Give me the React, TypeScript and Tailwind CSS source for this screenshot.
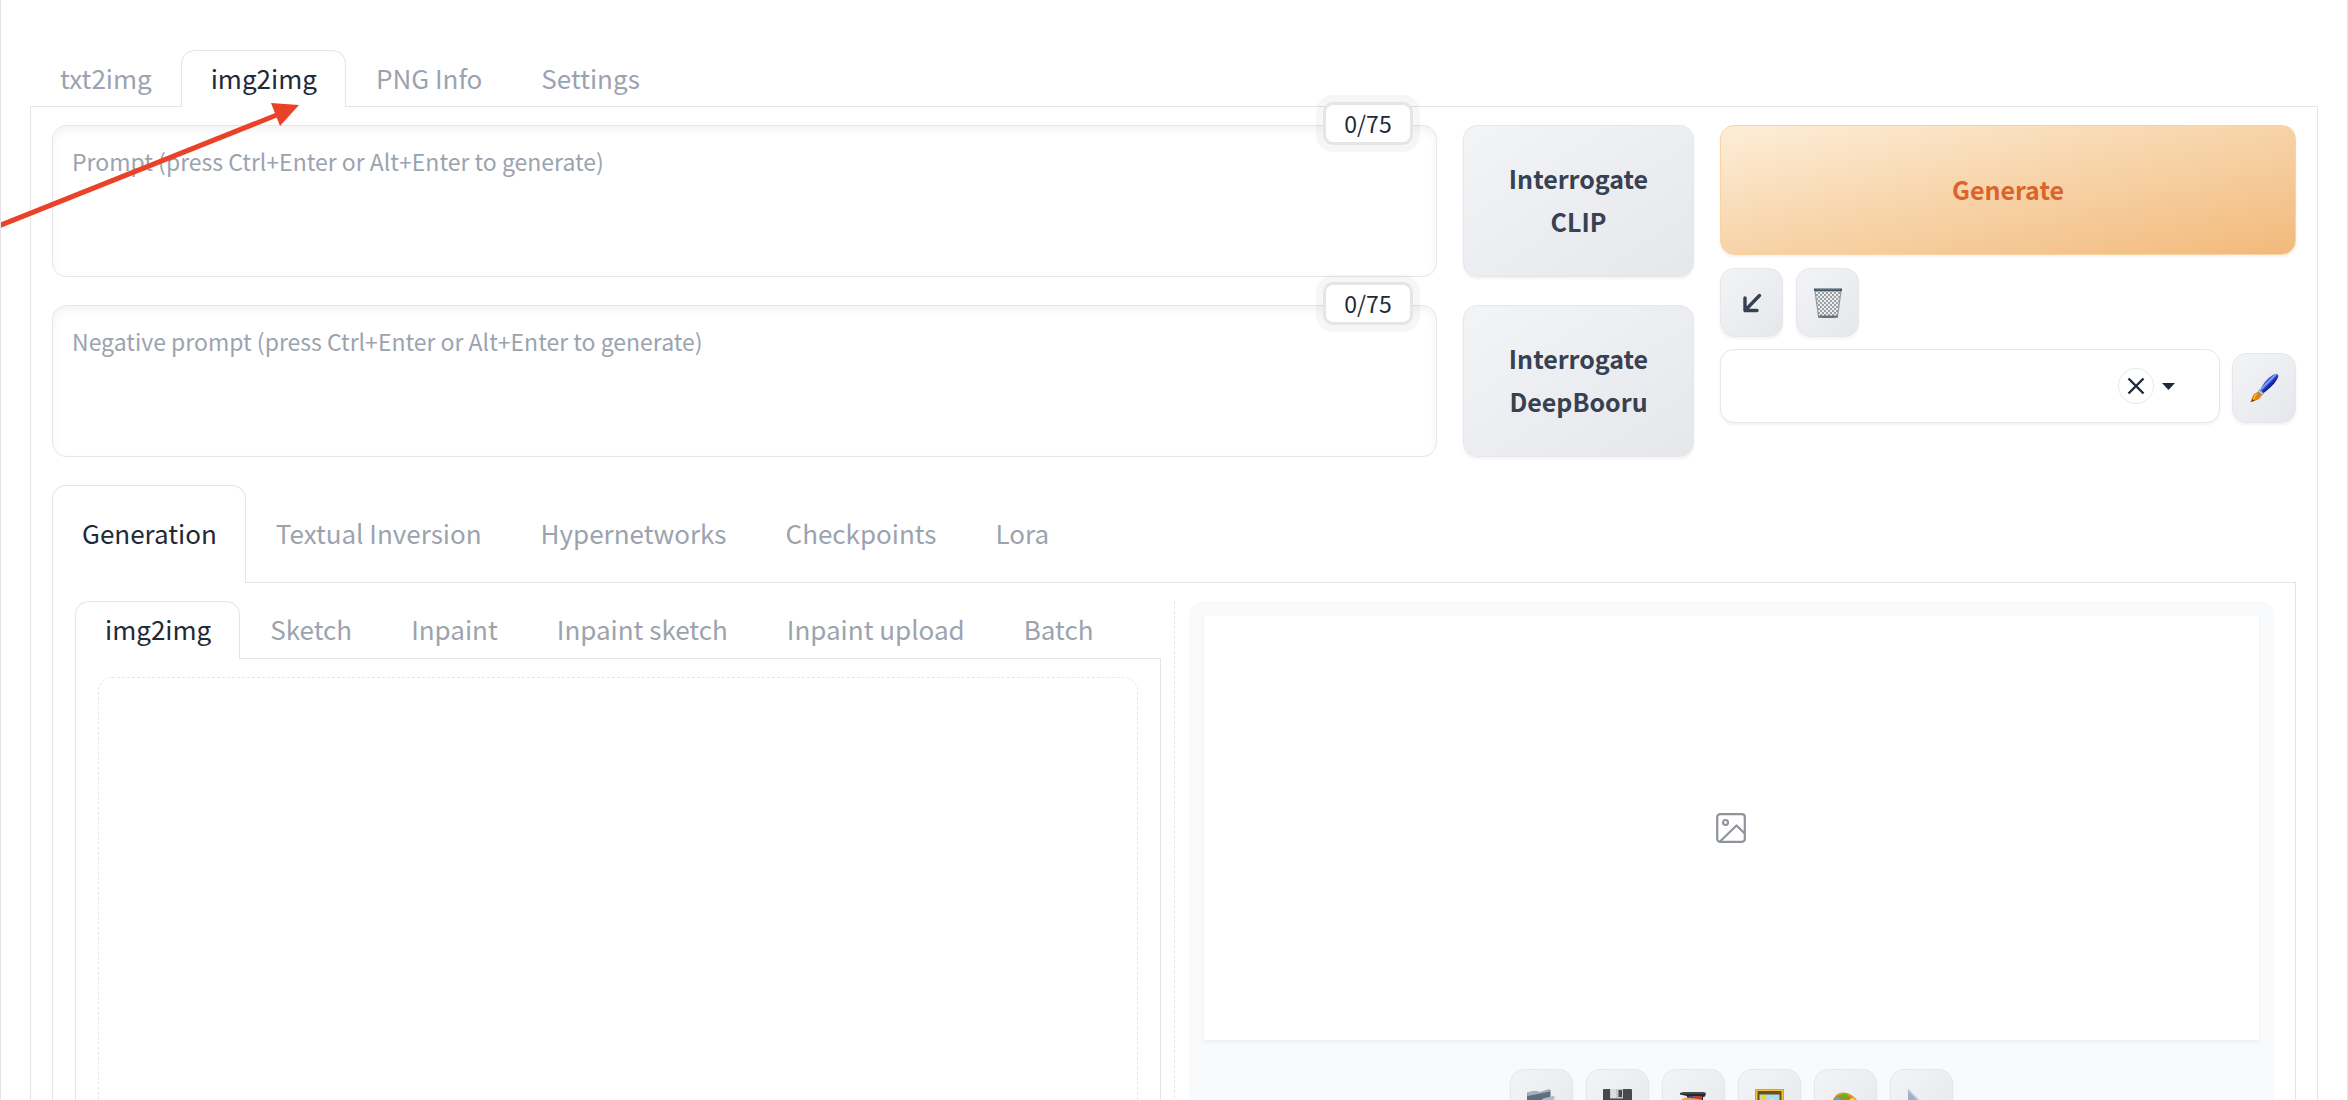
import React from 'react';

const FONT = "font-['Noto_Sans_CJK_SC','Noto_Sans',sans-serif]";
const LINE = 'border-[#e5e5e8]';
const TOOL =
  'flex shrink-0 items-center justify-center rounded-[14px] border border-[#e5e7eb] bg-linear-to-br from-[#f3f4f6] to-[#e5e7eb] shadow-[0_2px_3px_rgba(0,0,0,0.05)]';

function Tabs({ items, active, size, label }: { items: string[]; active: string; size: string; label: string }) {
  return (
    <div role="tablist" aria-label={label} className={`flex border-b ${LINE}`}>
      {items.map((t) => (
        <button
          key={t}
          role="tab"
          aria-selected={t === active}
          className={`${size} -mb-px shrink-0 rounded-t-[14px] border border-b-0 pr-7 pb-[3px] pl-[29px] text-[26px] leading-[38px] whitespace-nowrap ${
            t === active ? `${LINE} bg-white text-[#1f2937]` : 'border-transparent text-[#9ca3af]'
          }`}
        >
          {t}
        </button>
      ))}
    </div>
  );
}

function Prompt({ text }: { text: string }) {
  return (
    <div className="relative h-[152px]">
      <textarea
        aria-label={text}
        placeholder={text}
        className="block h-full w-full resize-none rounded-[14px] border border-[#e5e7eb] bg-white px-[19px] py-[17px] text-[23px] leading-[36px] text-[#1f2937] shadow-[inset_0_4px_8px_rgba(0,0,0,0.05)] outline-none placeholder:text-[#9ca3af]"
      />
      <span className="absolute -top-[23px] right-6 flex h-[43px] w-[90px] items-center justify-center rounded-[10px] border-3 border-[#e5e5e5] bg-white text-[23px] leading-none text-[#1f2937] shadow-[0_0_0_7px_rgba(0,0,0,0.035)]">
        0/75
      </span>
    </div>
  );
}

function Interrogate({ name }: { name: string }) {
  return (
    <button className={`${TOOL} h-[152px] w-full flex-col pb-[3px] text-[25px] leading-[43px] font-bold text-[#374151]`}>
      <span>Interrogate</span>
      <span>{name}</span>
    </button>
  );
}

const Arrow = () => (
  <svg width="20" height="20" viewBox="0 0 20 20" fill="none" stroke="#374151" strokeWidth="3.4" strokeLinecap="round" strokeLinejoin="round">
    <path d="M17.5 2.5 3 17.5M3 5v12.5h12" />
  </svg>
);

const Trash = () => (
  <svg width="30" height="32" viewBox="0 0 30 32">
    <defs>
      <pattern id="mesh" width="4" height="4" patternUnits="userSpaceOnUse">
        <path d="M0 0 4 4M4 0 0 4" stroke="#858b91" strokeWidth="0.8" />
      </pattern>
    </defs>
    <path d="M2 4h26l-3.600 26H5.600z" fill="#eceef0" />
    <path d="M2 4h26l-3.600 26H5.600z" fill="url(#mesh)" stroke="#9299a0" strokeWidth="1.2" />
    <path d="M5.300 28.500h19.400v2q-9.700 1.200-19.400 0z" fill="#68737d" />
    <path d="M1 1.500h28v2.500H1z" fill="#43525f" />
    <path d="M3 2.200h24" stroke="#7d97ad" strokeWidth="0.700" />
  </svg>
);

const Brush = () => (
  <svg width="29" height="30" viewBox="0 0 32 32">
    <defs>
      <linearGradient id="handle" gradientUnits="userSpaceOnUse" x1="18" y1="8" x2="24" y2="14">
        <stop offset="0" stopColor="#2440c4" />
        <stop offset="0.300" stopColor="#8fa8ff" />
        <stop offset="0.550" stopColor="#2038c0" />
        <stop offset="1" stopColor="#0b1870" />
      </linearGradient>
    </defs>
    <path d="M11 18C15 10 21 3.500 27 .8c3-1.200 4.800.5 4 3C29 9.500 22 16.500 15 21.500z" fill="url(#handle)" />
    <path d="m10.500 17.500 5 4.500-3.500 3.500-4.500-4z" fill="#85898d" />
    <path d="m9.500 19 4.500 4" stroke="#d8dbde" strokeWidth="1.200" />
    <path d="M7.500 21c3 .2 4.500 2 4.300 4.300C11 29 6 29.500 .5 31.500 2.500 28.500 2 22.500 7.500 21z" fill="#e0820a" />
    <path d="M7.500 22.500C5 24 5.200 27.500 3.500 29" stroke="#ffbe3c" strokeWidth="1.400" fill="none" />
    <path d="M.5 31.500c1-1 1.600-2.200 2-3.500l3 2z" fill="#6b3a08" />
  </svg>
);

const Folder = () => (
  <svg width="30" height="29" viewBox="0 0 30 29">
    <path d="M1 5q0-2 2-2l8-1 2 1.500L23 .5q1.500 0 1.500 1.500v14L3 26q-2 0-2-2z" fill="#5d6f80" />
    <path d="M1 5q0-2 2-2l8-1 2 1L23 .5l1 2L1.500 7z" fill="#a3b2bf" />
    <path d="M3 13 15 11.500l2-2L27 7q2-.3 1.500 1.500L24 20 3 27q-1.500 0-1.500-1.500z" fill="#aebac5" />
  </svg>
);

const Floppy = () => (
  <svg width="29" height="30" viewBox="0 0 29 30">
    <path d="M0 1q0-1 1-1h27q1 0 1 1v28H2l-2-2z" fill="#47494c" />
    <path d="M7 0h13v9.500H7z" fill="#c7c9cc" />
    <path d="M8 0h5v9H8z" fill="#dcdddf" />
    <path d="M15.500 1h3.500v7h-3.500z" fill="#47494c" />
    <path d="M5 15h19v14H5z" fill="#ececec" />
  </svg>
);

const Box = () => (
  <svg width="28" height="23" viewBox="0 0 28 23">
    <path d="M1 1 5 0h19l3 1-1 3.500-2 .5V18H8V4L1 2.500z" fill="#25282b" />
    <path d="M2 1h24" stroke="#686e73" strokeWidth="1" />
    <path d="M10 4h4v4h-4z" fill="#2f4fa8" />
    <path d="M14 4h9v3h-9z" fill="#b8412f" />
    <path d="M2 8q4-4 9-2l12 1.500v12H4z" fill="#eda75a" />
  </svg>
);

const Frame = () => (
  <svg width="29" height="30" viewBox="0 0 29 30">
    <path d="M0 0h29v30H0z" fill="#d9a51a" />
    <path d="M1 1h27v28H1z" fill="#eec63a" />
    <path d="M2.500 2h24v26h-24z" fill="#6f4d14" />
    <path d="M4.500 5.500h20V26h-20z" fill="#a9def2" />
    <circle cx="8.500" cy="8.500" r="2.800" fill="#f6d51d" />
    <path d="M5 18c4-7 8-1 11-9 2 2 5 2 8 7v9H5z" fill="#dfe8ec" />
  </svg>
);

const Palette = () => (
  <svg width="29" height="24" viewBox="0 0 29 24">
    <path d="M2 8C5 1 12-1 18 2c6 3 10 7 10 12 0 6-5 10-12 10C7 24-2 17 2 8z" fill="#c6801a" />
    <path d="M2 8C5 1 12-1 18 2c4 2 7 5 9 8-5-5-10-7-15-7-5 0-8 2-10 5z" fill="#d9962c" />
    <ellipse cx="13.500" cy="4" rx="3" ry="2.200" fill="#43c41e" />
    <ellipse cx="21.500" cy="8" rx="2.800" ry="2" fill="#f4dc32" />
    <ellipse cx="7" cy="8" rx="3" ry="3" fill="#36b4e8" />
    <ellipse cx="8" cy="16" rx="3" ry="3" fill="#3a4fd0" />
  </svg>
);

const Ruler = () => (
  <svg width="29" height="30" viewBox="0 0 29 30">
    <path d="M1 0 29 29H1zM6 13v11h10z" fill="#9db0cc" fillRule="evenodd" />
    <path d="M1 .5 28 28.500" stroke="#c0cfe4" strokeWidth="1.500" />
  </svg>
);

const tools = [
  { name: 'Open images output directory', icon: <Folder /> },
  { name: 'Save the image', icon: <Floppy /> },
  { name: 'Save zip archive', icon: <Box /> },
  { name: 'Send to img2img', icon: <Frame /> },
  { name: 'Send to inpaint', icon: <Palette /> },
  { name: 'Send to extras', icon: <Ruler /> },
];

export default function App() {
  return (
    <div className={`${FONT} relative flex h-screen flex-col overflow-hidden border-x ${LINE} bg-white px-[29px] pt-[50px]`}>
      <Tabs label="Main" items={['txt2img', 'img2img', 'PNG Info', 'Settings']} active="img2img" size="h-[57px]" />

      <main className={`flex flex-1 flex-col border-x ${LINE} px-[21px] pt-[18px]`}>
        <div className="flex gap-[26px]">
          <div className="flex min-w-0 flex-1 flex-col gap-7">
            <Prompt text="Prompt (press Ctrl+Enter or Alt+Enter to generate)" />
            <Prompt text="Negative prompt (press Ctrl+Enter or Alt+Enter to generate)" />
          </div>
          <div className="flex w-[231px] flex-col gap-7">
            <Interrogate name="CLIP" />
            <Interrogate name="DeepBooru" />
          </div>
          <div className="flex w-[576px] flex-col">
            <button className="h-[130px] rounded-[14px] border border-[#f9d4a3] bg-linear-to-br from-[#fdeed8] via-[#f7d3a8] to-[#f2b97a] pb-px text-[25px] font-bold text-[#da642b] shadow-[0_2px_3px_rgba(0,0,0,0.05)]">
              Generate
            </button>
            <div className="mt-[13px] flex gap-[13px]">
              <button aria-label="Read generation parameters" className={`${TOOL} h-[69px] w-[63px]`}><Arrow /></button>
              <button aria-label="Clear prompt" className={`${TOOL} h-[69px] w-[63px]`}><Trash /></button>
            </div>
            <div className="mt-3 flex items-end gap-3">
              <div className="flex h-[74px] flex-1 items-center rounded-[14px] border border-[#e5e7eb] bg-white pr-[44px] shadow-[0_2px_3px_rgba(0,0,0,0.05)]">
                <input aria-label="Styles" className="min-w-0 flex-1 bg-transparent px-4 text-[23px] outline-none" />
                <button aria-label="Clear styles" className="flex size-9 items-center justify-center rounded-full border border-[#e5e7eb]">
                  <svg width="18" height="18" viewBox="0 0 18 18" stroke="#1f2937" strokeWidth="2.400">
                    <path d="m1.500 1.500 15 15M16.500 1.500l-15 15" />
                  </svg>
                </button>
                <svg className="ml-2" width="13" height="7" viewBox="0 0 13 7" fill="#1f2937"><path d="M0 0h13L6.500 7z" /></svg>
              </div>
              <button aria-label="Apply styles" className={`${TOOL} h-[70px] w-[64px]`}><Brush /></button>
            </div>
          </div>
        </div>

        <div className="mt-7 flex flex-1 flex-col">
          <Tabs label="Extra networks" items={['Generation', 'Textual Inversion', 'Hypernetworks', 'Checkpoints', 'Lora']} active="Generation" size="h-[98px]" />
          <div className={`grid flex-1 grid-cols-[minmax(0,1fr)_auto_minmax(0,1fr)] border-x ${LINE} pt-[18px] pr-[21px] pl-[22px]`}>
            <div className="flex flex-col">
              <Tabs label="Input" items={['img2img', 'Sketch', 'Inpaint', 'Inpaint sketch', 'Inpaint upload', 'Batch']} active="img2img" size="h-[58px]" />
              <div className={`flex flex-1 border-x ${LINE} px-[22px] pt-[18px]`}>
                <div className="flex-1 rounded-t-[14px] border border-b-0 border-dashed border-[#e5e7eb]" />
              </div>
            </div>
            <div className="mr-[14px] ml-[13px] border-l border-dashed border-[#e5e7eb]" />
            <section aria-label="Results" className="flex flex-col items-center rounded-t-[14px] bg-[#f9fafb] px-[15px] pt-[15px]">
              <div className="flex h-[424px] w-full shrink-0 items-center justify-center bg-white shadow-[0_2px_4px_rgba(0,0,0,0.06)]">
                <svg width="30" height="30" viewBox="0 0 30 30" fill="none" stroke="#8f939b" strokeWidth="2.200" strokeLinejoin="round">
                  <rect x="1.200" y="1.200" width="27.600" height="27.600" rx="3" />
                  <circle cx="9.500" cy="9.500" r="2.500" />
                  <path d="M4 28.500 20.500 12.500l8.300 8" />
                </svg>
              </div>
              <div className="mt-[29px] flex gap-[13px]">
                {tools.map((t) => (
                  <button key={t.name} aria-label={t.name} className={`${TOOL} h-[69px] w-[63px]`}>{t.icon}</button>
                ))}
              </div>
            </section>
          </div>
        </div>
      </main>

      <svg className="pointer-events-none absolute top-[96px] -left-px" width="300" height="140" viewBox="0 0 300 140" fill="#ea4228">
        <path d="M-4 131 278 18.500" stroke="#ea4228" strokeWidth="5" />
        <path d="M271 7 299 9 280 30z" />
      </svg>
    </div>
  );
}
